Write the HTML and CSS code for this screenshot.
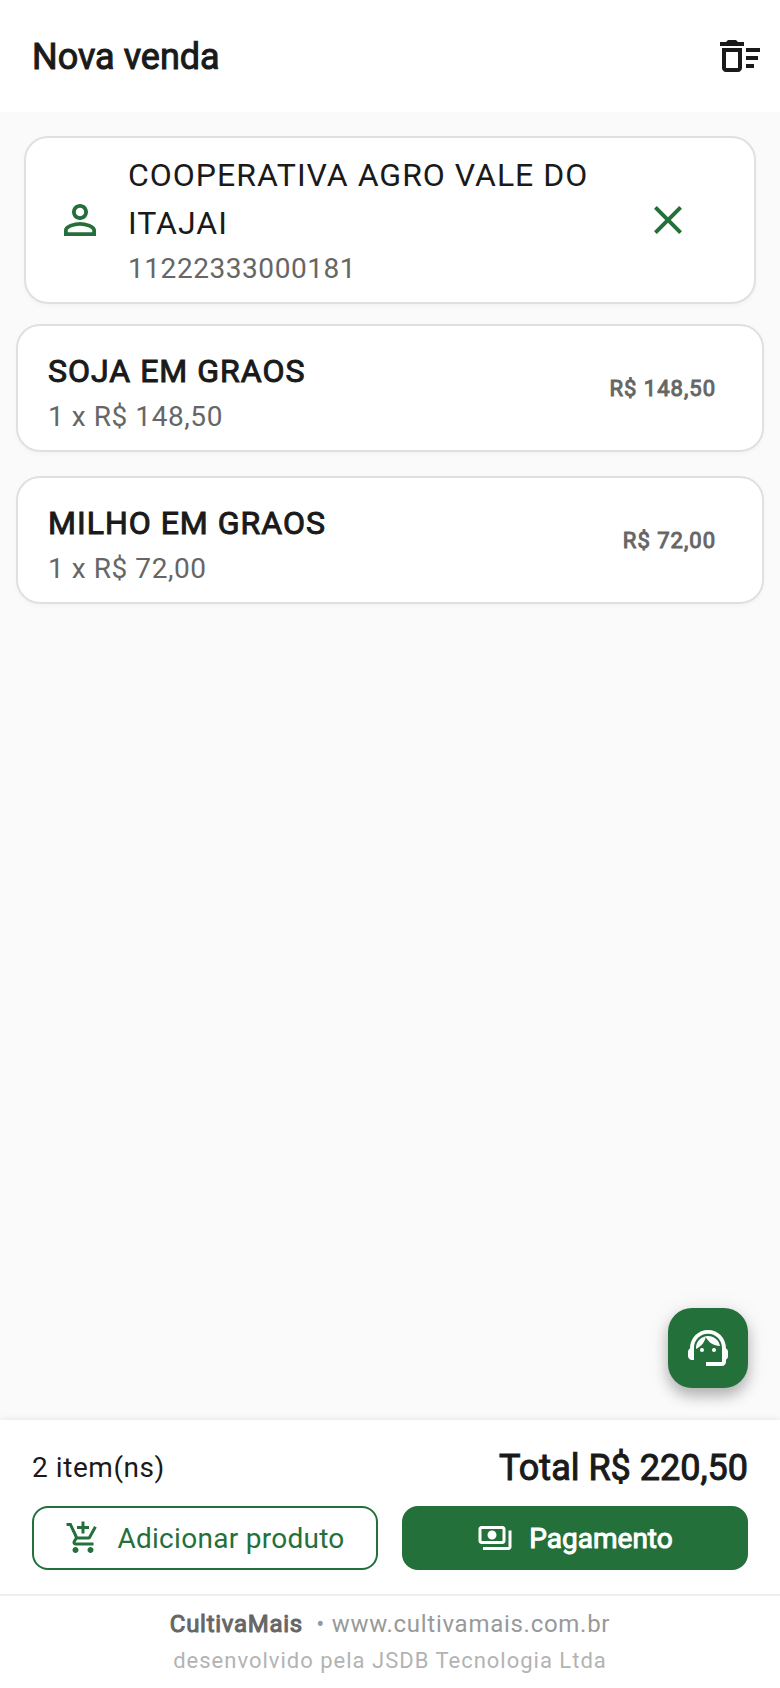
FILE: index.html
```html
<!DOCTYPE html>
<html lang="pt-BR">
<head>
    <meta charset="UTF-8">
    <meta name="viewport" content="width=device-width, initial-scale=1.0">
    <title>Nova venda</title>
    <link rel="stylesheet" href="styles.css">
</head>
<body>
    <header class="topbar">
        <h1>Nova venda</h1>
        <button class="icon-button" type="button" aria-label="Limpar venda">
            <svg class="icon" viewBox="0 0 24 24"><path d="M15 16h4v2h-4zM15 8h7v2h-7zM15 12h6v2h-6zM3 18c0 1.100.9 2 2 2h6c1.100 0 2-.9 2-2V8H3v10zM5 10h6v8H5v-8zM10 4H6L5 5H2v2h12V5h-3z"/></svg>
        </button>
    </header>

    <main class="content">
        <section class="card customer">
            <svg class="icon" viewBox="0 0 24 24"><path d="M12 5.900c1.160 0 2.100.94 2.100 2.100s-.94 2.100-2.100 2.100S9.900 9.160 9.900 8s.94-2.100 2.100-2.100m0 9c2.970 0 6.100 1.460 6.100 2.100v1.100H5.900V17c0-.64 3.130-2.100 6.100-2.100M12 4C9.790 4 8 5.790 8 8s1.790 4 4 4 4-1.790 4-4-1.790-4-4-4zm0 9c-2.670 0-8 1.340-8 4v3h16v-3c0-2.660-5.330-4-8-4z"/></svg>
            <div class="card-text">
                <p class="name">COOPERATIVA AGRO VALE DO ITAJAI</p>
                <p class="detail">11222333000181</p>
            </div>
            <button class="icon-button remove" type="button" aria-label="Remover cliente">
                <svg class="icon" viewBox="0 0 24 24"><path d="M19 6.410L17.590 5 12 10.590 6.410 5 5 6.410 10.590 12 5 17.590 6.410 19 12 13.410 17.590 19 19 17.590 13.410 12z"/></svg>
            </button>
        </section>

        <ul class="items">
            <li class="card item">
                <div class="card-text">
                    <h2 class="name strong">SOJA EM GRAOS</h2>
                    <p class="detail">1 x R$ 148,50</p>
                </div>
                <span class="price strong">R$ 148,50</span>
            </li>
            <li class="card item">
                <div class="card-text">
                    <h2 class="name strong">MILHO EM GRAOS</h2>
                    <p class="detail">1 x R$ 72,00</p>
                </div>
                <span class="price strong">R$ 72,00</span>
            </li>
        </ul>

        <button class="support" type="button" aria-label="Suporte">
            <svg class="icon" viewBox="0 0 24 24"><path d="M21 12.220C21 6.730 16.740 3 12 3c-4.690 0-9 3.650-9 9.280-.6.34-1 .98-1 1.720v2c0 1.100.9 2 2 2h1v-6.100c0-3.870 3.130-7 7-7s7 3.130 7 7V19h-8v2h8c1.100 0 2-.9 2-2v-1.220c.59-.31 1-.92 1-1.640v-2.300c0-.7-.41-1.310-1-1.620z"/><circle cx="9" cy="13" r="1"/><circle cx="15" cy="13" r="1"/><path d="M18 11.030C17.520 8.180 15.040 6 12.050 6c-3.030 0-6.290 2.510-6.030 6.450 2.470-1.010 4.330-3.210 4.860-5.890 1.310 2.630 4 4.440 7.120 4.470z"/></svg>
        </button>
    </main>

    <section class="summary">
        <div class="totals">
            <span class="count">2 item(ns)</span>
            <strong class="total strong">Total R$ 220,50</strong>
        </div>
        <div class="actions">
            <button class="button outline" type="button">
                <svg class="icon-small" viewBox="0 0 24 24"><path d="M11 9h2V6h3V4h-3V1h-2v3H8v2h3v3zM7 18c-1.100 0-1.990.9-1.990 2S5.900 22 7 22s2-.9 2-2-.9-2-2-2zM17 18c-1.100 0-1.990.9-1.990 2s.89 2 1.990 2 2-.9 2-2-.9-2-2-2zM8.100 13h7.450c.75 0 1.410-.41 1.750-1.030L21.160 4.960 19.420 4l-3.870 7H8.530L4.270 2H1v2h2l3.600 7.590-1.350 2.440C4.520 15.370 5.480 17 7 17h12v-2H7l1.100-2z"/></svg>
                Adicionar produto
            </button>
            <button class="button filled strong" type="button">
                <svg class="icon-small" viewBox="0 0 24 24"><path d="M19 14V6c0-1.100-.9-2-2-2H3c-1.100 0-2 .9-2 2v8c0 1.100.9 2 2 2h14c1.100 0 2-.9 2-2zm-2 0H3V6h14v8zm-7-7c-1.660 0-3 1.340-3 3s1.340 3 3 3 3-1.340 3-3-1.340-3-3-3zm13 0v11c0 1.100-.9 2-2 2H4v-2h17V7h2z"/></svg>
                Pagamento
            </button>
        </div>
    </section>

    <footer class="footer">
        <p class="site"><b class="strong">CultivaMais</b> &nbsp;• <a href="#">www.cultivamais.com.br</a></p>
        <p class="credits">desenvolvido pela JSDB Tecnologia Ltda</p>
    </footer>
</body>
</html>
```
FILE: styles.css
```css
* {
    box-sizing: border-box;
}

body {
    display: flex;
    flex-direction: column;
    min-height: 100vh;
    margin: 0;
    font-family: Roboto, "Liberation Sans", sans-serif;
    font-size: 28px;
    color: #1a1a1a;
    background-color: #fafafa;
}

h1, h2, p, ul {
    margin: 0;
    padding: 0;
}

button {
    padding: 0;
    border: none;
    background: none;
    color: inherit;
    font: inherit;
    cursor: pointer;
}

/* regular weight thickened by a stroke, keeps the regular widths */
.strong {
    font-weight: 400;
    -webkit-text-stroke: 1px currentColor;
}

.icon {
    display: block;
    flex: none;
    width: 48px;
    height: 48px;
    fill: currentColor;
}

.icon-small {
    flex: none;
    width: 36px;
    height: 36px;
    fill: currentColor;
}

.topbar {
    display: flex;
    align-items: center;
    justify-content: space-between;
    height: 112px;
    padding: 0 16px 0 32px;
    background-color: #fff;
}

.topbar h1 {
    padding-top: 2px;
    font-size: 36px;
    font-weight: 400;
    -webkit-text-stroke: 1px currentColor;
}

.content {
    position: relative;
    flex: 1;
    padding: 24px 16px;
}

.card {
    display: flex;
    align-items: center;
    border: 2px solid #e0e0e0;
    border-radius: 24px;
    background-color: #fff;
    box-shadow: 0 2px 4px rgba(0, 0, 0, 0.03);
}

.card-text {
    flex: 1;
}

.customer {
    gap: 24px;
    margin: 0 8px 20px;
    padding: 0 38px 0 30px;
    color: #24703b;
}

.customer .card-text {
    padding: 13px 0 11px;
}

.customer .name {
    color: #1a1a1a;
}

.remove {
    display: flex;
    justify-content: center;
    width: 96px;
}

.items {
    display: flex;
    flex-direction: column;
    gap: 24px;
    list-style-type: none;
}

.item {
    padding: 0 46px 0 30px;
}

.item .card-text {
    padding: 21px 0 11px;
}

.name {
    font-size: 32px;
    line-height: 48px;
    letter-spacing: 1px;
}

.detail {
    line-height: 44px;
    letter-spacing: 0.02em;
    color: #666;
}

.price {
    font-size: 22px;
    letter-spacing: 1px;
    color: #666;
}

.support {
    position: absolute;
    right: 32px;
    bottom: 32px;
    display: flex;
    align-items: center;
    justify-content: center;
    width: 80px;
    height: 80px;
    border-radius: 24px;
    background-color: #24703b;
    color: #fff;
    box-shadow: 0 8px 14px rgba(0, 0, 0, 0.26), 0 2px 24px rgba(0, 0, 0, 0.08);
}

.summary {
    position: relative;
    padding: 24px 32px;
    background-color: #fff;
    box-shadow: 0 -1px 6px rgba(0, 0, 0, 0.08);
}

.totals {
    display: flex;
    align-items: center;
    justify-content: space-between;
    margin-bottom: 14px;
    line-height: 48px;
}

.count {
    letter-spacing: 0.02em;
}

.total {
    font-size: 36px;
}

.actions {
    display: flex;
    gap: 24px;
}

.button {
    display: flex;
    flex: 1;
    align-items: center;
    justify-content: center;
    gap: 16px;
    height: 64px;
    border: 2px solid #24703b;
    border-radius: 16px;
}

.outline {
    color: #24703b;
    letter-spacing: 0.01em;
}

.filled {
    background-color: #24703b;
    color: #fff;
}

.footer {
    position: relative;
    padding: 10px 16px 8px;
    border-top: 2px solid #eee;
    background-color: #fff;
    text-align: center;
}

.site {
    font-size: 24px;
    line-height: 36px;
    letter-spacing: 0.03em;
    color: #999;
}

.site b {
    color: #666;
}

.site a {
    color: inherit;
    text-decoration: none;
}

.credits {
    font-size: 22px;
    line-height: 38px;
    letter-spacing: 1px;
    color: #b3b3b3;
}
```
